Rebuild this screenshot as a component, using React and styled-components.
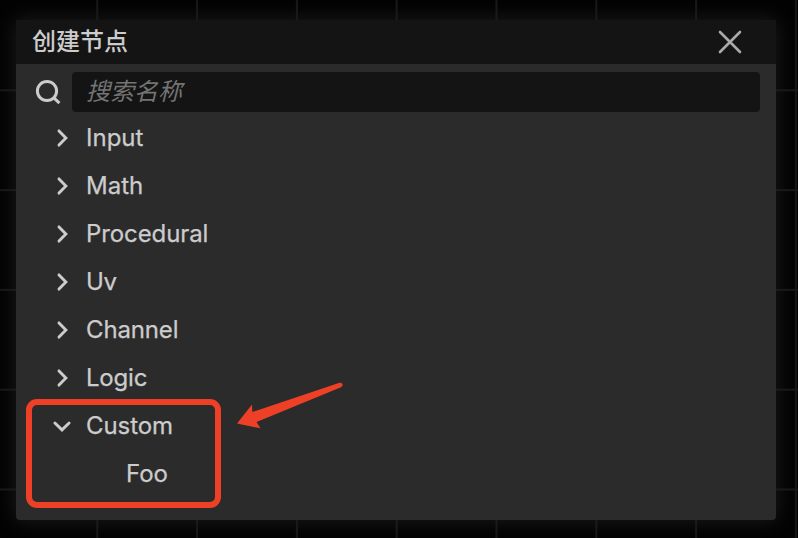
import React from "react";
import styled, { createGlobalStyle } from "styled-components";

const GlobalStyle = createGlobalStyle`
  * { box-sizing: border-box; }
  html, body { margin: 0; background: #030303; overflow: hidden; }
`;

const Canvas = styled.main`
  width: 798px;
  height: 538px;
  padding: 20px 22px 18px 16px;
  overflow: hidden;
  font-family: Inter, "Noto Sans CJK SC", sans-serif;
  font-size: 24px;
  color: #cccccc;
  background-color: #030303;
  background-image:
    linear-gradient(90deg, #181818 2px, transparent 2px),
    linear-gradient(#181818 2px, transparent 2px);
  background-size: 99.8px 100%, 100% 99.8px;
  background-position: -3.5px 0, 0 -10.5px;
`;

const Panel = styled.section`
  position: relative;
  width: 760px;
  height: 500px;
  border-radius: 0 0 4px 4px;
  background: #2b2b2b;
  box-shadow: 0 0 20px rgba(32, 32, 32, 0.9);
`;

const Header = styled.header`
  display: flex;
  align-items: center;
  justify-content: space-between;
  height: 44px;
  padding: 0 33px 0 16px;
  background: #141414;
`;

const Title = styled.h1`
  margin: 0;
  font-size: 24px;
  font-weight: 500;
  line-height: 44px;
`;

const IconButton = styled.button`
  display: flex;
  padding: 0;
  border: 0;
  background: none;
  color: #aaaaaa;
`;

const SearchRow = styled.div`
  display: flex;
  align-items: center;
  height: 56px;
  padding: 0 16px 0 18px;
`;

const SearchIcon = styled.svg`
  flex: none;
  width: 28px;
  height: 28px;
  margin-right: 10px;
`;

const SearchInput = styled.input`
  flex: 1;
  min-width: 0;
  height: 40px;
  padding: 0 14px 2px;
  border: 0;
  border-radius: 4px;
  outline: 0;
  background: #141414;
  color: #cccccc;
  font: italic 24px Inter, "Noto Sans CJK SC", sans-serif;
  &::placeholder { color: #737373; opacity: 1; }
`;

const Tree = styled.ul`
  margin: -6px 0 0;
  padding: 0;
  list-style: none;
`;

const TreeRow = styled.li`
  display: flex;
  align-items: center;
  height: 48px;
  padding-left: ${({ $nested }) => ($nested ? 110 : 36)}px;
  line-height: 48px;
`;

const Chevron = styled.svg`
  width: 20px;
  height: 20px;
  margin-right: 14px;
  transform: rotate(${({ $open }) => ($open ? 90 : 0)}deg);
`;

const Label = styled.span`
  letter-spacing: ${({ $tracking = 0 }) => $tracking}px;
  -webkit-text-stroke: 0.25px currentColor;
`;

const Highlight = styled.div`
  position: absolute;
  left: 10px;
  top: 379px;
  width: 195px;
  height: 109px;
  border: 6px solid #ee4026;
  border-radius: 11px;
`;

const Arrow = styled.svg`
  position: absolute;
  left: 214px;
  top: 355px;
  width: 120px;
  height: 60px;
`;

const groups = [
  { name: "Input", tracking: 0 },
  { name: "Math", tracking: 0 },
  { name: "Procedural", tracking: -0.1 },
  { name: "Uv", tracking: -0.3 },
  { name: "Channel", tracking: -0.15 },
  { name: "Logic", tracking: -0.2 },
  { name: "Custom", tracking: -0.08, open: true, children: [{ name: "Foo", tracking: 0 }] },
];

function Group({ group }) {
  return (
    <>
      <TreeRow>
        <Chevron $open={group.open} viewBox="0 0 20 20" fill="none" stroke="#cccccc" strokeWidth="2.9" strokeLinecap="round" strokeLinejoin="miter">
          <path d="M7 2.9L13.9 10L7 17.1" />
        </Chevron>
        <Label $tracking={group.tracking}>{group.name}</Label>
      </TreeRow>
      {group.children?.map((child) => (
        <TreeRow key={child.name} $nested>
          <Label $tracking={child.tracking}>{child.name}</Label>
        </TreeRow>
      ))}
    </>
  );
}

export default function App() {
  return (
    <>
      <GlobalStyle />
      <Canvas>
        <Panel>
          <Header>
            <Title>创建节点</Title>
            <IconButton aria-label="关闭">
              <svg width="26" height="26" viewBox="0 0 26 26" fill="none" stroke="currentColor" strokeWidth="2.6" strokeLinecap="round">
                <path d="M3 3L23 23M23 3L3 23" />
              </svg>
            </IconButton>
          </Header>
          <SearchRow>
            <SearchIcon viewBox="0 0 28 28" fill="none" stroke="#cccccc" strokeWidth="3">
              <circle cx="13" cy="13" r="9.6" />
              <path d="M19.6 19.6L25.4 25.2" />
            </SearchIcon>
            <SearchInput placeholder="搜索名称" />
          </SearchRow>
          <Tree>
            {groups.map((group) => (
              <Group key={group.name} group={group} />
            ))}
          </Tree>
          <Highlight />
          <Arrow viewBox="0 0 120 60" fill="#ee4026">
            <path d="M7 48.5L22 29.5L22.3 37L109.5 7.8C112.5 7 114 10.6 111 12.2L26.5 47L30.5 53.3Z" />
          </Arrow>
        </Panel>
      </Canvas>
    </>
  );
}
